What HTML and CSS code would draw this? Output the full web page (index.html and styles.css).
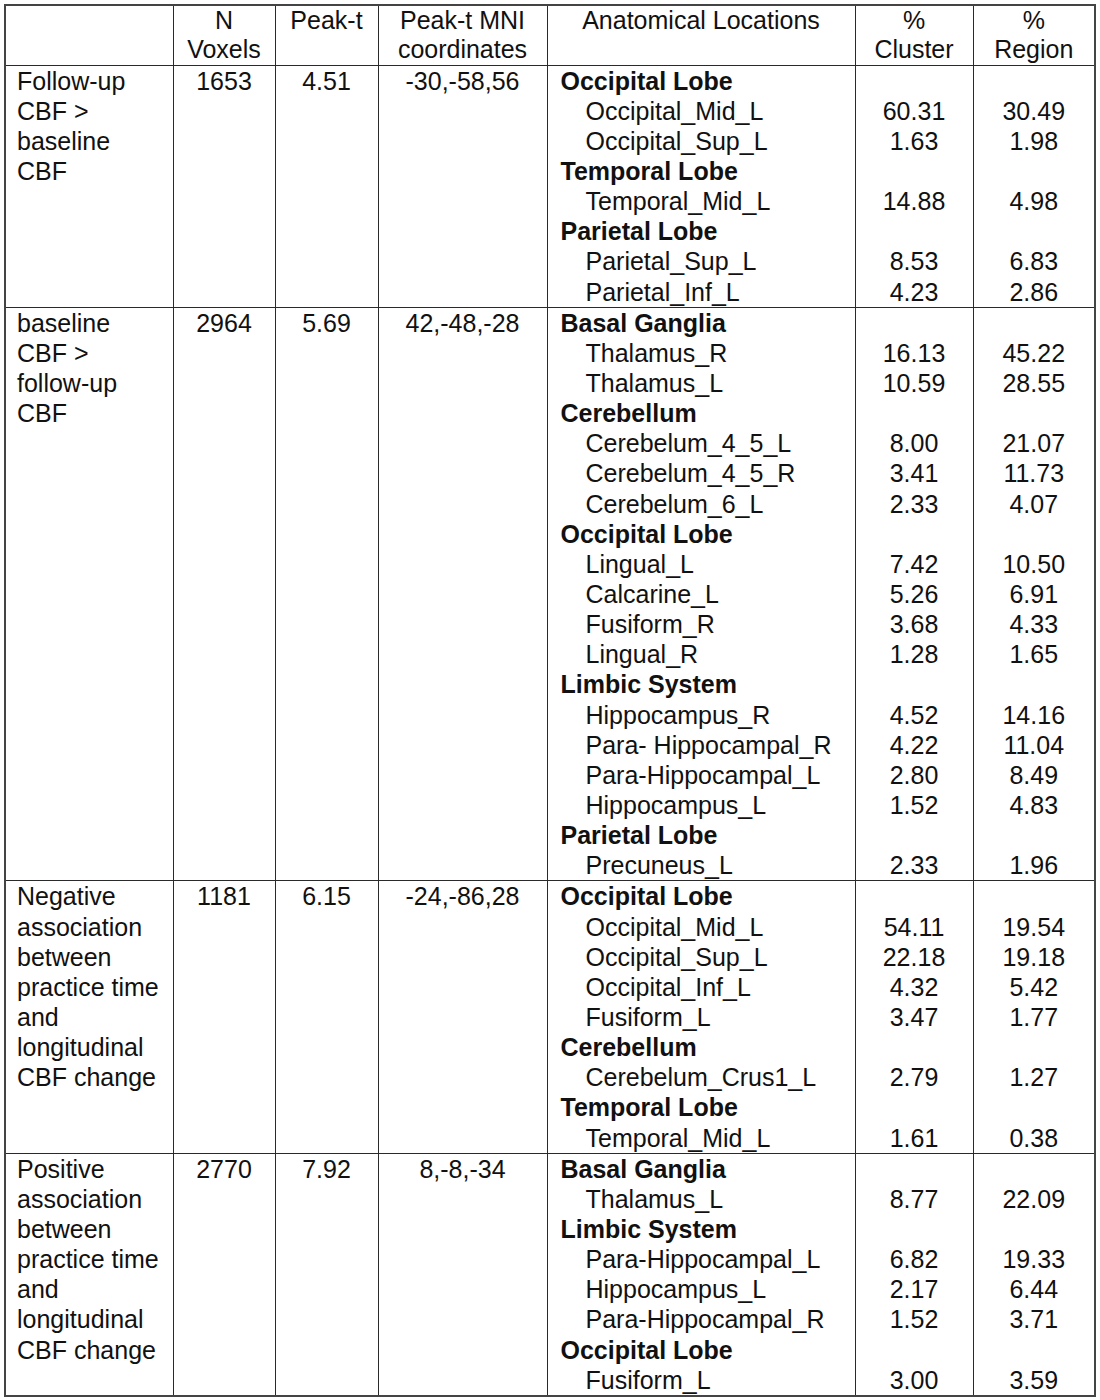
FILE: index.html
```html
<!DOCTYPE html>
<html lang="en">
<head>
<meta charset="utf-8">
<title>Clusters of CBF change</title>
<link rel="stylesheet" href="styles.css">
</head>
<body>
<table class="tbl">
  <colgroup>
    <col class="c-label">
    <col class="c-vox">
    <col class="c-peak">
    <col class="c-mni">
    <col class="c-anat">
    <col class="c-clu">
    <col class="c-reg">
  </colgroup>
  <thead>
    <tr>
      <th></th>
      <th>N<br>Voxels</th>
      <th>Peak-t</th>
      <th>Peak-t MNI<br>coordinates</th>
      <th>Anatomical Locations</th>
      <th>%<br>Cluster</th>
      <th>%<br>Region</th>
    </tr>
  </thead>
  <tbody>
    <tr>
      <td class="label">Follow-up CBF &gt; baseline CBF</td>
      <td class="num">1653</td>
      <td class="num">4.51</td>
      <td class="num">-30,-58,56</td>
      <td class="anat">
        <div class="ln head">Occipital Lobe</div>
        <div class="ln sub">Occipital_Mid_L</div>
        <div class="ln sub">Occipital_Sup_L</div>
        <div class="ln head">Temporal Lobe</div>
        <div class="ln sub">Temporal_Mid_L</div>
        <div class="ln head">Parietal Lobe</div>
        <div class="ln sub">Parietal_Sup_L</div>
        <div class="ln sub">Parietal_Inf_L</div>
      </td>
      <td class="num">
        <div class="ln"></div><div class="ln">60.31</div><div class="ln">1.63</div>
        <div class="ln"></div><div class="ln">14.88</div>
        <div class="ln"></div><div class="ln">8.53</div><div class="ln">4.23</div>
      </td>
      <td class="num">
        <div class="ln"></div><div class="ln">30.49</div><div class="ln">1.98</div>
        <div class="ln"></div><div class="ln">4.98</div>
        <div class="ln"></div><div class="ln">6.83</div><div class="ln">2.86</div>
      </td>
    </tr>
    <tr>
      <td class="label">baseline CBF &gt; follow-up CBF</td>
      <td class="num">2964</td>
      <td class="num">5.69</td>
      <td class="num">42,-48,-28</td>
      <td class="anat">
        <div class="ln head">Basal Ganglia</div>
        <div class="ln sub">Thalamus_R</div>
        <div class="ln sub">Thalamus_L</div>
        <div class="ln head">Cerebellum</div>
        <div class="ln sub">Cerebelum_4_5_L</div>
        <div class="ln sub">Cerebelum_4_5_R</div>
        <div class="ln sub">Cerebelum_6_L</div>
        <div class="ln head">Occipital Lobe</div>
        <div class="ln sub">Lingual_L</div>
        <div class="ln sub">Calcarine_L</div>
        <div class="ln sub">Fusiform_R</div>
        <div class="ln sub">Lingual_R</div>
        <div class="ln head">Limbic System</div>
        <div class="ln sub">Hippocampus_R</div>
        <div class="ln sub">Para- Hippocampal_R</div>
        <div class="ln sub">Para-Hippocampal_L</div>
        <div class="ln sub">Hippocampus_L</div>
        <div class="ln head">Parietal Lobe</div>
        <div class="ln sub">Precuneus_L</div>
      </td>
      <td class="num">
        <div class="ln"></div><div class="ln">16.13</div><div class="ln">10.59</div>
        <div class="ln"></div><div class="ln">8.00</div><div class="ln">3.41</div><div class="ln">2.33</div>
        <div class="ln"></div><div class="ln">7.42</div><div class="ln">5.26</div><div class="ln">3.68</div><div class="ln">1.28</div>
        <div class="ln"></div><div class="ln">4.52</div><div class="ln">4.22</div><div class="ln">2.80</div><div class="ln">1.52</div>
        <div class="ln"></div><div class="ln">2.33</div>
      </td>
      <td class="num">
        <div class="ln"></div><div class="ln">45.22</div><div class="ln">28.55</div>
        <div class="ln"></div><div class="ln">21.07</div><div class="ln">11.73</div><div class="ln">4.07</div>
        <div class="ln"></div><div class="ln">10.50</div><div class="ln">6.91</div><div class="ln">4.33</div><div class="ln">1.65</div>
        <div class="ln"></div><div class="ln">14.16</div><div class="ln">11.04</div><div class="ln">8.49</div><div class="ln">4.83</div>
        <div class="ln"></div><div class="ln">1.96</div>
      </td>
    </tr>
    <tr>
      <td class="label">Negative association between practice time and longitudinal CBF change</td>
      <td class="num">1181</td>
      <td class="num">6.15</td>
      <td class="num">-24,-86,28</td>
      <td class="anat">
        <div class="ln head">Occipital Lobe</div>
        <div class="ln sub">Occipital_Mid_L</div>
        <div class="ln sub">Occipital_Sup_L</div>
        <div class="ln sub">Occipital_Inf_L</div>
        <div class="ln sub">Fusiform_L</div>
        <div class="ln head">Cerebellum</div>
        <div class="ln sub">Cerebelum_Crus1_L</div>
        <div class="ln head">Temporal Lobe</div>
        <div class="ln sub">Temporal_Mid_L</div>
      </td>
      <td class="num">
        <div class="ln"></div><div class="ln">54.11</div><div class="ln">22.18</div><div class="ln">4.32</div><div class="ln">3.47</div>
        <div class="ln"></div><div class="ln">2.79</div>
        <div class="ln"></div><div class="ln">1.61</div>
      </td>
      <td class="num">
        <div class="ln"></div><div class="ln">19.54</div><div class="ln">19.18</div><div class="ln">5.42</div><div class="ln">1.77</div>
        <div class="ln"></div><div class="ln">1.27</div>
        <div class="ln"></div><div class="ln">0.38</div>
      </td>
    </tr>
    <tr>
      <td class="label">Positive association between practice time and longitudinal CBF change</td>
      <td class="num">2770</td>
      <td class="num">7.92</td>
      <td class="num">8,-8,-34</td>
      <td class="anat">
        <div class="ln head">Basal Ganglia</div>
        <div class="ln sub">Thalamus_L</div>
        <div class="ln head">Limbic System</div>
        <div class="ln sub">Para-Hippocampal_L</div>
        <div class="ln sub">Hippocampus_L</div>
        <div class="ln sub">Para-Hippocampal_R</div>
        <div class="ln head">Occipital Lobe</div>
        <div class="ln sub">Fusiform_L</div>
      </td>
      <td class="num">
        <div class="ln"></div><div class="ln">8.77</div>
        <div class="ln"></div><div class="ln">6.82</div><div class="ln">2.17</div><div class="ln">1.52</div>
        <div class="ln"></div><div class="ln">3.00</div>
      </td>
      <td class="num">
        <div class="ln"></div><div class="ln">22.09</div>
        <div class="ln"></div><div class="ln">19.33</div><div class="ln">6.44</div><div class="ln">3.71</div>
        <div class="ln"></div><div class="ln">3.59</div>
      </td>
    </tr>
  </tbody>
</table>
</body>
</html>
```
FILE: styles.css
```css
html, body {
  margin: 0;
  padding: 0;
  background: #ffffff;
}

body {
  font-family: "Liberation Sans", Arial, Helvetica, sans-serif;
  font-size: 25px;
  color: #111111;
}

.tbl {
  margin: 4px 0 0 4px;
  width: 1090px;
  table-layout: fixed;
  border-collapse: collapse;
  border: 2px solid #444444;
}

.c-label { width: 168px; }
.c-vox { width: 102px; }
.c-peak { width: 103px; }
.c-mni { width: 169px; }
.c-anat { width: 308px; }
.c-clu { width: 118px; }
.c-reg { width: 122px; }

.tbl th,
.tbl td {
  border: 1px solid #2a2a2a;
  vertical-align: top;
  padding: 0;
  line-height: 30.15px;
}

.tbl th {
  font-weight: normal;
  text-align: center;
  line-height: 29.3px;
}

.tbl td.label {
  padding: 0 12px 0 11px;
  text-align: left;
}

.tbl td.num {
  text-align: center;
}

.tbl td.anat {
  padding-left: 13px;
  text-align: left;
  white-space: nowrap;
}

.ln {
  height: 30.15px;
  line-height: 30.15px;
}

.ln.head {
  font-weight: bold;
}

.ln.sub {
  padding-left: 25px;
}
```
